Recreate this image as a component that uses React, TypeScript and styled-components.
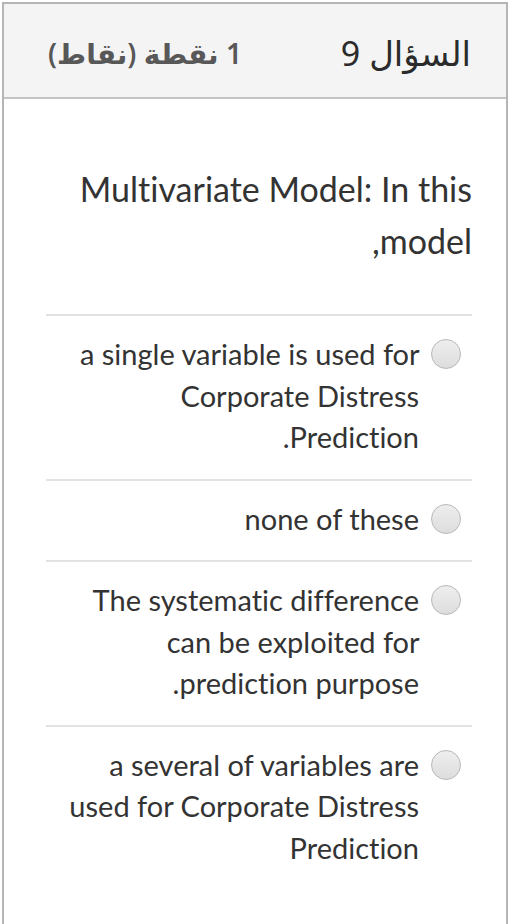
import React from "react";
import styled, { createGlobalStyle } from "styled-components";

const GlobalStyle = createGlobalStyle`
  html, body {
    margin: 0;
    padding: 0;
    background: #ffffff;
  }
  body {
    font-family: Lato, "Noto Sans", sans-serif;
    font-variant-ligatures: no-common-ligatures;
    color: #333333;
  }
`;

const answers = [
  "a single variable is used for Corporate Distress Prediction.",
  "none of these",
  "The systematic difference can be exploited for prediction purpose.",
  "a several of variables are used for Corporate Distress Prediction",
];

const App = () => {
  return (
    <>
      <GlobalStyle />
      <Card dir="rtl">
        <Header>
          <Title>السؤال 9</Title>
          <Points>1 نقطة (نقاط)</Points>
        </Header>
        <Body>
          <Question>Multivariate Model: In this model,</Question>
          <Answers>
            {answers.map((text) => (
              <Answer key={text}>
                <Radio />
                <AnswerText>{text}</AnswerText>
              </Answer>
            ))}
          </Answers>
        </Body>
      </Card>
    </>
  );
};

export default App;

const Card = styled.div`
  margin: 2px 0 0 2px;
  width: 506px;
  min-height: 940px;
  box-sizing: border-box;
  border: 2px solid #b5b5b5;
  border-bottom: none;
`;

const Header = styled.div`
  display: flex;
  align-items: center;
  justify-content: space-between;
  height: 95px;
  padding: 4px 35px 0 44px;
  box-sizing: border-box;
  background: #f4f4f4;
  border-bottom: 2px solid #c4c4c4;
`;

const Title = styled.h2`
  margin: 0;
  font-family: "Noto Sans", "DejaVu Sans", sans-serif;
  font-size: 34px;
  font-weight: 400;
  color: #2b2b2b;
`;

const Points = styled.div`
  font-family: "Noto Sans", "DejaVu Sans", sans-serif;
  font-size: 28px;
  font-weight: 600;
  color: #585858;
`;

const Body = styled.div`
  padding: 64px 34px 0 42px;
`;

const Question = styled.p`
  margin: 0 0 47px;
  font-size: 34px;
  line-height: 52px;
  color: #333333;
`;

const Answers = styled.div`
  display: flex;
  flex-direction: column;
`;

const Answer = styled.div`
  display: flex;
  align-items: flex-start;
  gap: 12px;
  padding: 17px 11px 21px 8px;
  border-top: 2px solid #e2e2e2;
`;

const Radio = styled.span`
  flex: none;
  width: 30px;
  height: 30px;
  margin-top: 6px;
  border-radius: 50%;
  box-sizing: border-box;
  border: 1px solid #b8b8b8;
  background: linear-gradient(#eeeeee, #dddddd);
`;

const AnswerText = styled.span`
  font-size: 29px;
  line-height: 41.5px;
  color: #333333;
`;
